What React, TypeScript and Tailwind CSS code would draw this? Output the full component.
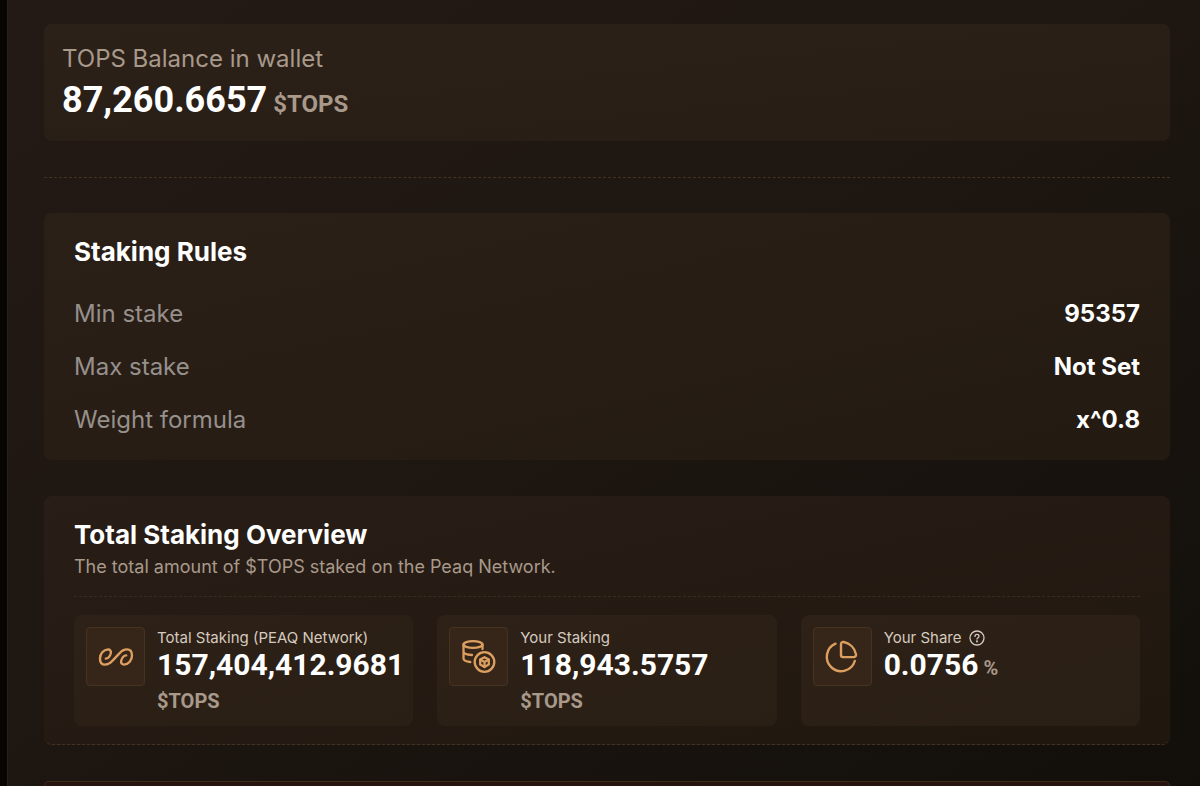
import type { ReactNode } from "react";

interface StatCardProps {
  icon: ReactNode;
  label: string;
  value: string;
  unit: string;
  help?: boolean;
}

const rules = [
  { label: "Min stake", value: "95357" },
  { label: "Max stake", value: "Not Set" },
  { label: "Weight formula", value: "x^0.8" },
];

function InfinityIcon() {
  return (
    <svg
      width="36"
      height="36"
      viewBox="0 0 36 36"
      fill="none"
      stroke="currentColor"
      strokeWidth="2.4"
      strokeLinecap="round"
      strokeLinejoin="round"
    >
      <path d="M7.800 19.600C10.400 19.400 12 17.200 12.800 14.200C13.300 11.800 12 10.400 10 10.400C5.400 10.600 2 14.800 2 19.400C2 23.200 4 25.600 7 25.600C10.400 25.600 12.600 24 14.600 21.600L21.400 14.400C23.400 12 25.600 10.400 29 10.400C32 10.400 34 12.800 34 16.600C34 21.200 30.600 25.400 26 25.600C24 25.600 22.700 24.200 23.200 21.800C24 18.800 25.600 16.600 28.200 16.400" />
    </svg>
  );
}

function CoinsIcon() {
  return (
    <svg
      width="36"
      height="36"
      viewBox="0 0 36 36"
      fill="none"
      stroke="currentColor"
      strokeWidth="2.3"
      strokeLinecap="round"
      strokeLinejoin="round"
    >
      <ellipse cx="12" cy="5.500" rx="9.500" ry="3.300" />
      <path d="M2.500 5.500v14c0 1.800 2.700 3 6.800 3.500M2.500 12.500c0 1.800 3 3.200 8.500 3.500M21.500 5.500v4.500" />
      <circle cx="23.500" cy="23" r="9.800" />
      <path d="M23.500 18.200l4.300 2.400v5L23.500 28l-4.300-2.400v-5z" />
      <path d="M19.200 20.600l4.300 2.400 4.300-2.400M23.500 23v5" />
    </svg>
  );
}

function PieIcon() {
  return (
    <svg
      width="36"
      height="36"
      viewBox="0 0 36 36"
      fill="none"
      stroke="currentColor"
      strokeWidth="2.4"
      strokeLinecap="round"
      strokeLinejoin="round"
    >
      <path d="M11.500 4.700A14.300 14.300 0 1 0 30.800 22" />
      <path d="M17 5.300c0-1.700 1.200-2.600 2.800-2.300 6.200 1.300 11 6 12.200 12.200.3 1.600-.7 2.900-2.400 2.900H19c-1.300 0-2-.7-2-2z" />
    </svg>
  );
}

function HelpIcon() {
  return (
    <svg
      width="16"
      height="16"
      viewBox="0 0 16 16"
      fill="none"
      stroke="currentColor"
      strokeWidth="1.300"
      strokeLinecap="round"
    >
      <circle cx="8" cy="8" r="7" />
      <path d="M6 6.400c0-1.200.9-2 2-2s2 .7 2 1.800c0 1.400-2 1.500-2 2.900" />
      <circle cx="8" cy="11.400" r=".4" fill="currentColor" />
    </svg>
  );
}

function StatCard({ icon, label, value, unit, help }: StatCardProps) {
  return (
    <div className="flex gap-3 rounded-lg bg-linear-to-br from-[#2d2118] to-[#2a1f14] p-3">
      <div className="flex size-[59px] shrink-0 items-center justify-center rounded-sm border border-[#47321f] bg-[#36261a] text-[#dd9f60]">
        {icon}
      </div>
      <div className="min-w-0">
        <div className="flex items-center gap-2 text-[15px] leading-[21px] text-[#d6cabf]">
          {label}
          {help && (
            <button type="button" aria-label="About your share">
              <HelpIcon />
            </button>
          )}
        </div>
        <p className="font-[Roboto,sans-serif] text-[30px] leading-[33px] font-bold text-white">
          {value}
          <span className="text-xl leading-5 text-[#a8998b]"> {unit}</span>
        </p>
      </div>
    </div>
  );
}

function App() {
  return (
    <div className="min-h-screen bg-[#060504] pl-[7px] font-[Inter,sans-serif]">
      <main className="flex min-h-screen flex-col border-l border-[#2a1e16] bg-linear-to-br from-[#241a15] via-[#1d1611] to-[#120f0b] pt-6 pr-[30px] pl-9">
        <section className="rounded-lg bg-linear-to-br from-[#2c2119] to-[#271d14] px-[18px] pt-[18px] pb-4">
          <h2 className="text-2xl leading-[34px] text-[#a8998b]">TOPS Balance in wallet</h2>
          <p className="font-[Roboto,sans-serif] text-4xl leading-[49px] font-bold text-white">
            87,260.6657<span className="text-2xl text-[#a8998b]"> $TOPS</span>
          </p>
        </section>

        <hr className="mt-9 mb-[35px] border-t border-dashed border-[#44341f]" />

        <section className="rounded-lg bg-linear-to-br from-[#2b2018] to-[#231a12] px-[30px] py-6">
          <h2 className="text-[26px] leading-[30px] font-bold text-white">Staking Rules</h2>
          <dl className="mt-[31px] flex flex-col gap-[21px] text-2xl leading-8">
            {rules.map((rule) => (
              <div key={rule.label} className="flex justify-between">
                <dt className="text-[#96908c]">{rule.label}</dt>
                <dd className="font-bold text-white">{rule.value}</dd>
              </div>
            ))}
          </dl>
        </section>

        <section className="mt-9 rounded-lg border-b border-dashed border-[#44341f] bg-linear-to-br from-[#291e17] to-[#20170f] px-[30px] pt-6 pb-[18px]">
          <h2 className="text-[26px] leading-[30px] font-bold text-white">Total Staking Overview</h2>
          <p className="border-b border-dashed border-[#3a2c1e] pb-3 text-lg leading-[34px] text-[#a8998b]">
            The total amount of $TOPS staked on the Peaq Network.
          </p>
          <div className="mt-[18px] grid grid-cols-3 gap-6">
            <StatCard
              icon={<InfinityIcon />}
              label="Total Staking (PEAQ Network)"
              value="157,404,412.9681"
              unit="$TOPS"
            />
            <StatCard icon={<CoinsIcon />} label="Your Staking" value="118,943.5757" unit="$TOPS" />
            <StatCard icon={<PieIcon />} label="Your Share" value="0.0756" unit="%" help />
          </div>
        </section>

        <section className="mt-9 flex-1 rounded-t-lg border border-b-0 border-[#402a1a] bg-[#25150e]" />
      </main>
    </div>
  );
}

export default App;
